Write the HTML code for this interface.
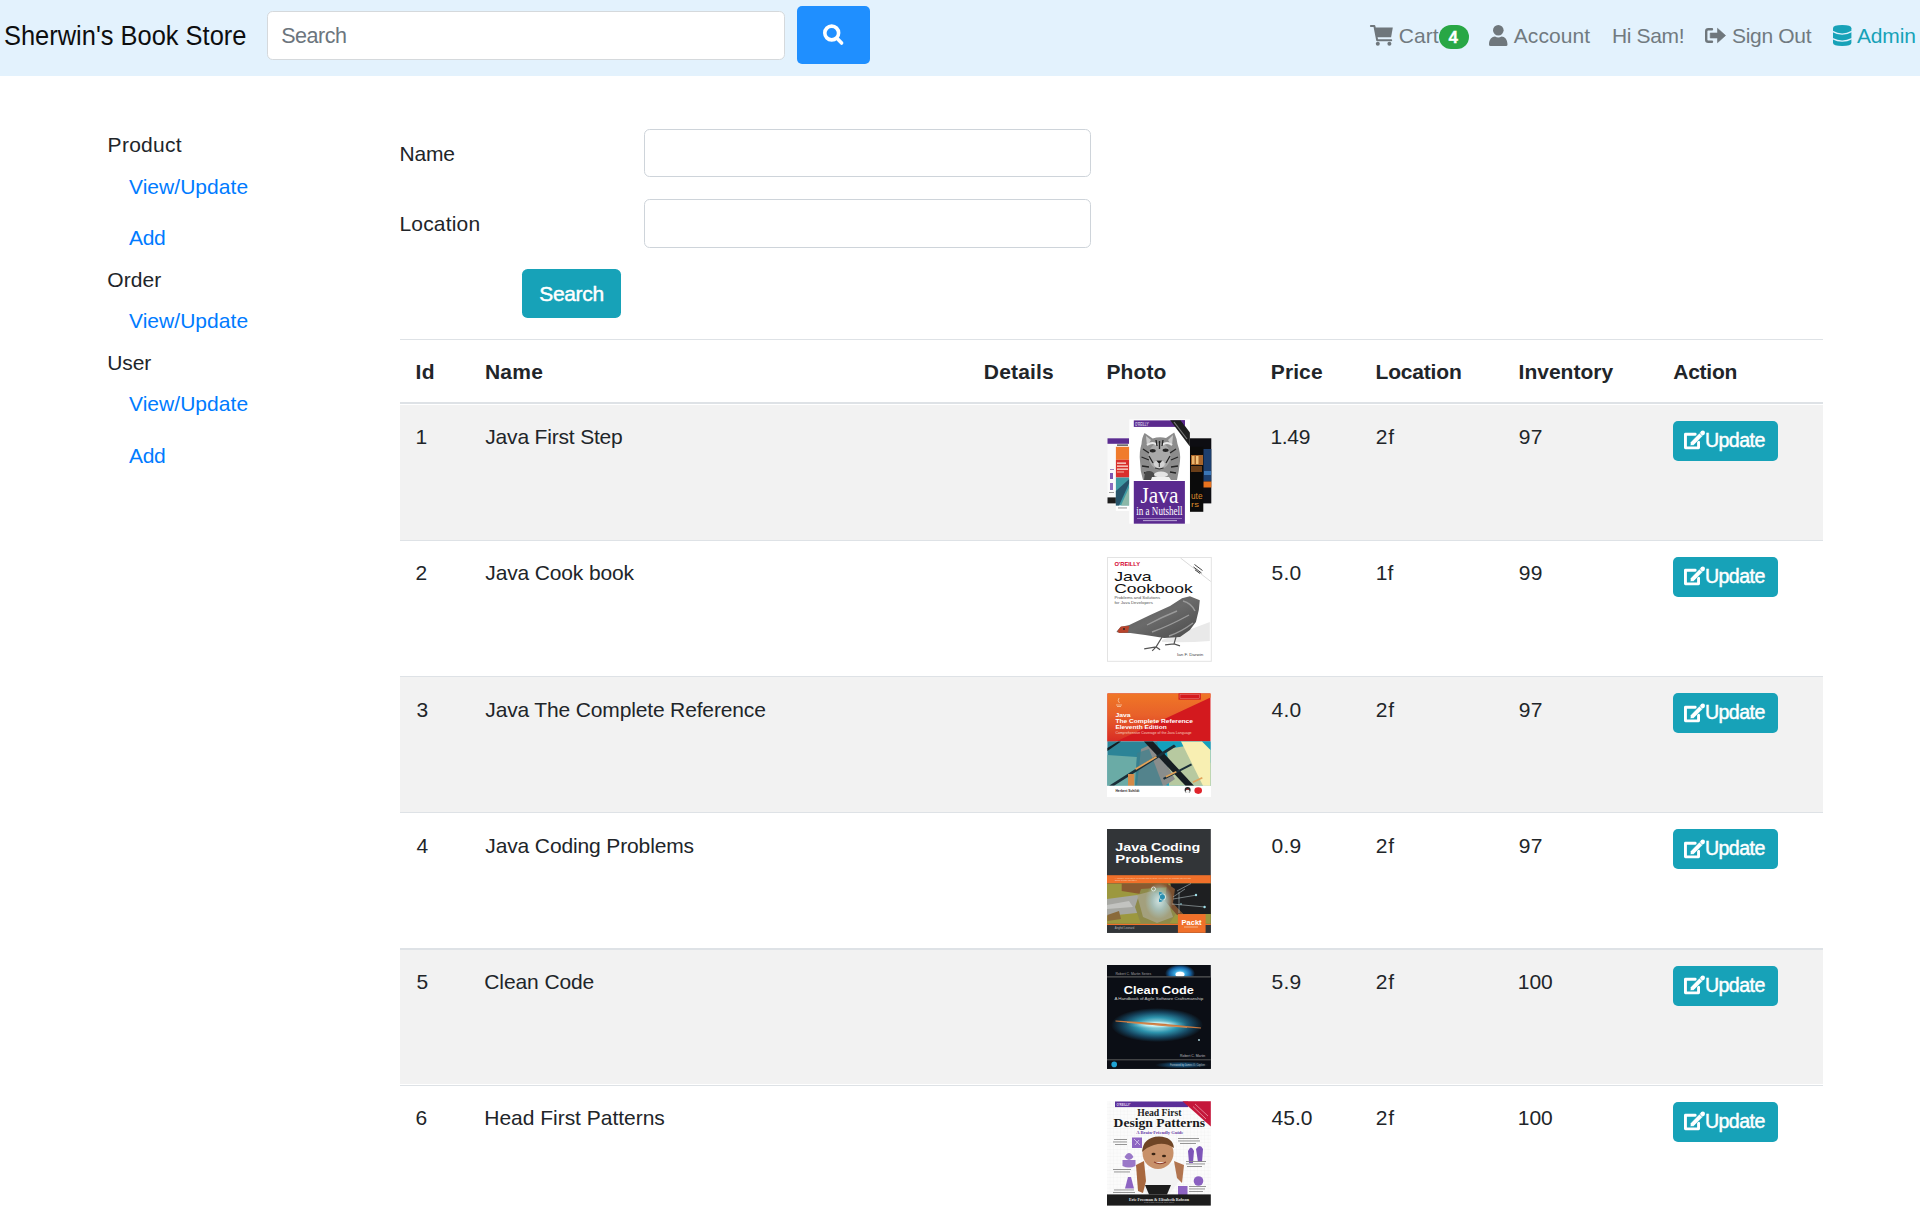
<!DOCTYPE html>
<html><head><meta charset="utf-8">
<style>
html,body{margin:0;padding:0;background:#fff;}
body{width:1920px;height:1208px;position:relative;overflow:hidden;font-family:"Liberation Sans",sans-serif;}
.t{position:absolute;white-space:nowrap;}
.nav{position:absolute;left:0;top:0;width:1920px;height:76.4px;background:#e3f2fd;}
.inp{position:absolute;box-sizing:border-box;background:#fff;border:1.4px solid #ced4da;border-radius:5.6px;}
.btn{position:absolute;border-radius:5.6px;}
.hl{position:absolute;left:400px;width:1422.7px;background:#dee2e6;}
.rowbg{position:absolute;left:400px;width:1422.7px;background:#f2f2f2;}
.ubtn{position:absolute;left:1673px;width:105px;height:40.2px;background:#17a2b8;border-radius:5px;}
.edit{position:absolute;left:1684px;}
svg{position:absolute;overflow:visible;}
</style></head><body>
<div class="nav"></div>
<div class="inp" style="left:267px;top:10.5px;width:518px;height:49.2px;border-color:#d5d9dc"></div>
<div class="btn" style="left:797px;top:6.1px;width:73px;height:57.6px;background:#1f8fff;border-radius:5px"></div>
<svg style="left:819px;top:20px" width="28" height="28" viewBox="0 0 28 28"><circle cx="12.7" cy="13" r="6.9" fill="none" stroke="#fff" stroke-width="3.6"/><path d="M18.2 18.6 L22.6 23" stroke="#fff" stroke-width="3.6" stroke-linecap="round"/></svg>
<!-- cart icon -->
<svg style="left:1370px;top:24.7px" width="23" height="21" viewBox="0 0 23 21"><path d="M0.9 1.1 H4.4 L7.2 15.3 H21.2" fill="none" stroke="#6f777c" stroke-width="2" stroke-linejoin="round" stroke-linecap="round"/><path d="M4.6 2.6 H22.8 L21.1 12.2 H6.3 Z" fill="#6f777c"/><circle cx="7.8" cy="18.7" r="2" fill="#6f777c"/><circle cx="19.4" cy="18.7" r="2" fill="#6f777c"/></svg>
<!-- badge -->
<div style="position:absolute;left:1439.3px;top:25px;width:29.5px;height:24px;border-radius:12px;background:#28a745"></div>
<div class="t" style="left:1448.6px;top:28.5px;font-size:17px;line-height:17px;font-weight:700;color:#fff;-webkit-text-stroke:0.3px #fff">4</div>
<!-- user icon -->
<svg style="left:1489.2px;top:24.7px" width="19" height="21" viewBox="0 0 19 21"><circle cx="9.3" cy="5.3" r="5.3" fill="#6f777c"/><path d="M0 19.5 C0 14.5 3 11.6 6 11.6 Q9.3 13.4 12.6 11.6 C15.6 11.6 18.5 14.5 18.5 19.5 Q18.5 21 17 21 H1.5 Q0 21 0 19.5 Z" fill="#6f777c"/></svg>
<!-- sign out icon -->
<svg style="left:1705.2px;top:27.6px" width="21" height="15" viewBox="0 0 21 15"><path d="M7 1.2 H3.2 Q1.2 1.2 1.2 3.2 V11.8 Q1.2 13.8 3.2 13.8 H7" fill="none" stroke="#6f777c" stroke-width="2.4" stroke-linecap="round"/><path d="M5.2 5 H12.5 V0.3 L20.6 7.5 L12.5 14.7 V10 H5.2 Z" fill="#6f777c" stroke="#6f777c" stroke-width="0.6" stroke-linejoin="round"/></svg>
<!-- database icon -->
<svg style="left:1832.9px;top:24.7px" width="19" height="21" viewBox="0 0 19 21"><path d="M0 3.3 Q0 0 9.2 0 Q18.4 0 18.4 3.3 V17.7 Q18.4 21 9.2 21 Q0 21 0 17.7 Z" fill="#17a2b8"/><path d="M-0.5 6.4 Q9.2 11.9 18.9 6.4 M-0.5 13.7 Q9.2 18.7 18.9 13.7" fill="none" stroke="#e3f2fd" stroke-width="1.3"/></svg>
<!-- form inputs -->
<div class="inp" style="left:643.8px;top:129px;width:447.3px;height:48.4px"></div>
<div class="inp" style="left:643.8px;top:199.1px;width:447.3px;height:48.7px"></div>
<div class="btn" style="left:521.6px;top:268.6px;width:99.1px;height:49.1px;background:#17a2b8"></div>
<div class="hl" style="top:338.8px;height:1.4px"></div><div class="hl" style="top:401.9px;height:2.6px"></div><div class="rowbg" style="top:404.50px;height:135.00px"></div><div class="ubtn" style="top:420.50px"></div><svg class="edit" style="top:431.10px" viewBox="0 0 21 19" width="21" height="19"><path d="M11.2 3.3 H1.45 V16.85 H14.55 V11.2" fill="none" stroke="#fff" stroke-width="2.9" stroke-linejoin="round" stroke-linecap="round"/><path d="M6.3 14.6 L6.48 11.26 L17.23 0.26 L20.37 3.34 L9.62 14.34 Z" fill="#fff" stroke="#19a5b9" stroke-width="0.5" stroke-linejoin="round"/><path d="M15.3 1.8 L18.4 4.9" stroke="#19a5b9" stroke-width="0.8"/><circle cx="18.8" cy="1.8" r="2.2" fill="#fff"/></svg><div class="hl" style="top:539.50px;height:1.4px"></div><div class="ubtn" style="top:556.75px"></div><svg class="edit" style="top:567.35px" viewBox="0 0 21 19" width="21" height="19"><path d="M11.2 3.3 H1.45 V16.85 H14.55 V11.2" fill="none" stroke="#fff" stroke-width="2.9" stroke-linejoin="round" stroke-linecap="round"/><path d="M6.3 14.6 L6.48 11.26 L17.23 0.26 L20.37 3.34 L9.62 14.34 Z" fill="#fff" stroke="#19a5b9" stroke-width="0.5" stroke-linejoin="round"/><path d="M15.3 1.8 L18.4 4.9" stroke="#19a5b9" stroke-width="0.8"/><circle cx="18.8" cy="1.8" r="2.2" fill="#fff"/></svg><div class="hl" style="top:675.75px;height:1.4px"></div><div class="rowbg" style="top:677.15px;height:134.85px"></div><div class="ubtn" style="top:693.00px"></div><svg class="edit" style="top:703.60px" viewBox="0 0 21 19" width="21" height="19"><path d="M11.2 3.3 H1.45 V16.85 H14.55 V11.2" fill="none" stroke="#fff" stroke-width="2.9" stroke-linejoin="round" stroke-linecap="round"/><path d="M6.3 14.6 L6.48 11.26 L17.23 0.26 L20.37 3.34 L9.62 14.34 Z" fill="#fff" stroke="#19a5b9" stroke-width="0.5" stroke-linejoin="round"/><path d="M15.3 1.8 L18.4 4.9" stroke="#19a5b9" stroke-width="0.8"/><circle cx="18.8" cy="1.8" r="2.2" fill="#fff"/></svg><div class="hl" style="top:812.00px;height:1.4px"></div><div class="ubtn" style="top:829.25px"></div><svg class="edit" style="top:839.85px" viewBox="0 0 21 19" width="21" height="19"><path d="M11.2 3.3 H1.45 V16.85 H14.55 V11.2" fill="none" stroke="#fff" stroke-width="2.9" stroke-linejoin="round" stroke-linecap="round"/><path d="M6.3 14.6 L6.48 11.26 L17.23 0.26 L20.37 3.34 L9.62 14.34 Z" fill="#fff" stroke="#19a5b9" stroke-width="0.5" stroke-linejoin="round"/><path d="M15.3 1.8 L18.4 4.9" stroke="#19a5b9" stroke-width="0.8"/><circle cx="18.8" cy="1.8" r="2.2" fill="#fff"/></svg><div class="hl" style="top:948.25px;height:1.4px"></div><div class="rowbg" style="top:949.65px;height:134.85px"></div><div class="ubtn" style="top:965.50px"></div><svg class="edit" style="top:976.10px" viewBox="0 0 21 19" width="21" height="19"><path d="M11.2 3.3 H1.45 V16.85 H14.55 V11.2" fill="none" stroke="#fff" stroke-width="2.9" stroke-linejoin="round" stroke-linecap="round"/><path d="M6.3 14.6 L6.48 11.26 L17.23 0.26 L20.37 3.34 L9.62 14.34 Z" fill="#fff" stroke="#19a5b9" stroke-width="0.5" stroke-linejoin="round"/><path d="M15.3 1.8 L18.4 4.9" stroke="#19a5b9" stroke-width="0.8"/><circle cx="18.8" cy="1.8" r="2.2" fill="#fff"/></svg><div class="hl" style="top:1084.50px;height:1.4px"></div><div class="ubtn" style="top:1101.75px"></div><svg class="edit" style="top:1112.35px" viewBox="0 0 21 19" width="21" height="19"><path d="M11.2 3.3 H1.45 V16.85 H14.55 V11.2" fill="none" stroke="#fff" stroke-width="2.9" stroke-linejoin="round" stroke-linecap="round"/><path d="M6.3 14.6 L6.48 11.26 L17.23 0.26 L20.37 3.34 L9.62 14.34 Z" fill="#fff" stroke="#19a5b9" stroke-width="0.5" stroke-linejoin="round"/><path d="M15.3 1.8 L18.4 4.9" stroke="#19a5b9" stroke-width="0.8"/><circle cx="18.8" cy="1.8" r="2.2" fill="#fff"/></svg>
<svg style="left:1106.5px;top:419.45px;overflow:hidden" width="105" height="105" viewBox="0 0 105 105"><defs><radialGradient id="tg" cx="0.5" cy="0.45" r="0.55"><stop offset="0" stop-color="#9a9a9a"/><stop offset="0.7" stop-color="#8a8a8a"/><stop offset="1" stop-color="#d0d0d0"/></radialGradient></defs>
<rect x="0.5" y="18.8" width="21.5" height="66.6" fill="#fafafa"/>
<rect x="0.5" y="19.3" width="21.5" height="5.5" fill="#5b2c90"/>
<rect x="10" y="25.5" width="11" height="1.2" fill="#333"/>
<rect x="3" y="50" width="4" height="1" fill="#9c88c0"/>
<rect x="3" y="54" width="3" height="6" fill="#7b55b0"/>
<rect x="3" y="64" width="3" height="7" fill="#8c6cc0"/>
<rect x="2" y="73" width="5" height="1" fill="#999"/>
<rect x="0.5" y="78.4" width="9" height="6" fill="#1d1d1d"/>
<rect x="8.9" y="27.8" width="13.4" height="64" fill="#ffffff"/>
<rect x="8.9" y="27.8" width="13.4" height="13" fill="#f07b2c"/>
<rect x="8.9" y="40.8" width="13.4" height="17.7" fill="#d9302c"/>
<rect x="10" y="43.5" width="9" height="1.3" fill="#fbe1d8"/>
<rect x="10" y="46.5" width="11" height="1.3" fill="#fbe1d8"/>
<rect x="10" y="49.5" width="11" height="1.3" fill="#fbe1d8"/>
<rect x="10" y="52.5" width="7" height="1" fill="#f4b4a4"/>
<rect x="8.9" y="58.5" width="13.4" height="27.9" fill="#3f9aa3"/>
<path d="M8.9 72 L22.3 60 V64 L12 86.4 H8.9 Z" fill="#27546a"/>
<path d="M14 86.4 L22.3 68 V86.4 Z" fill="#8cb8a8"/>
<rect x="11" y="88.5" width="9" height="0.9" fill="#888"/>
<rect x="82.9" y="19.3" width="21.4" height="65.1" fill="#0d0d12"/>
<rect x="96.3" y="30" width="8" height="32.5" fill="#1d3f6e"/>
<rect x="97" y="52" width="7" height="4" fill="#3a76b6"/>
<rect x="96.3" y="62.5" width="8" height="6" fill="#e8731f"/>
<rect x="82.9" y="27.8" width="13.4" height="65" fill="#0b0b0b"/>
<rect x="84" y="36" width="12" height="10" fill="#a8652a"/>
<rect x="85" y="37" width="2.5" height="8" fill="#e8b36a"/>
<rect x="89" y="37" width="2.5" height="8" fill="#f2c47c"/>
<rect x="84" y="47" width="11" height="6" fill="#6a3e18"/>
<text x="84" y="80" font-family="Liberation Sans" font-size="9" font-weight="400" fill="#d9892d" textLength="11.5" lengthAdjust="spacingAndGlyphs" >ute</text>
<text x="84" y="88" font-family="Liberation Sans" font-size="8" font-weight="400" fill="#d9892d" textLength="8" lengthAdjust="spacingAndGlyphs" >rs</text>
<rect x="22.3" y="0.4" width="60.6" height="104.3" fill="#ffffff"/>
<rect x="26.8" y="1.4" width="51.1" height="6.5" fill="#5b2a8e"/>
<text x="28" y="6.6" font-family="Liberation Sans" font-size="4.6" font-weight="700" fill="#d8cce8" textLength="14" lengthAdjust="spacingAndGlyphs" >O'REILLY'</text>
<path d="M63.2 1.2 H73.7 L82.9 13.6 V27.5 Z" fill="#1e1e1e"/><path d="M73.7 1.2 H78 V7.35 Z" fill="#5b2a8e"/><path d="M67 3 L80 20" stroke="#777" stroke-width="1.2"/>
<g>
<path d="M37.6 14 L45.7 19.5 Q52 17.5 59 19 L67.2 13.5 Q70 20 70.5 25 Q74 35 73 42 Q72 52 70 61 L36 61 Q33 52 33 42 Q32 33 34.5 25 Q35 18 37.6 14 Z" fill="#8c8c8c"/>
<path d="M39 17 L44 21 L40 27 Z M66 16 L61 21 L65 27 Z" fill="#c9c9c9"/>
<ellipse cx="52.5" cy="37" rx="11" ry="13" fill="#a9a9a9"/>
<path d="M40 26 Q46 22 50 26 M55 26 Q60 22 65 26" stroke="#e8e8e8" stroke-width="2" fill="none"/>
<ellipse cx="45.7" cy="31.8" rx="3" ry="1.7" fill="#262626"/>
<ellipse cx="58.6" cy="31.3" rx="3" ry="1.7" fill="#262626"/>
<path d="M52.5 22 V30 M49 21 L50 27 M56 21 L55 27 M36 30 L42 34 M69 30 L63 34 M34.5 38 L42 41 M71 38 L64 41 M35 47 L42 48 M71 47 L64 48 M37 54 L43 53 M69 54 L63 53 M42 37 L46 44 M63 37 L59 44" stroke="#262626" stroke-width="1.3" fill="none"/>
<ellipse cx="52.3" cy="45" rx="5.5" ry="4" fill="#d2d2d2"/>
<path d="M49.3 41.5 L55.3 41.5 L52.3 45 Z" fill="#1b1b1b"/>
<path d="M52.3 45 V48 M48 49 Q52.3 51 56.6 49" stroke="#2a2a2a" stroke-width="0.9" fill="none"/>
<path d="M38 53 Q45 50 48 56 L46 61 H37 Z" fill="#4a4a4a"/>
<ellipse cx="54" cy="55.5" rx="7" ry="3" fill="#e4e4e4"/>
<path d="M45 58 L62 58 L64 61 H44 Z" fill="#f0f0f0"/>
</g>
<rect x="26.8" y="62" width="51.1" height="42.7" fill="#5a2a8f"/>
<text x="33.5" y="84.4" font-family="Liberation Serif" font-size="23" font-weight="400" fill="#fff" textLength="38" lengthAdjust="spacingAndGlyphs" >Java</text>
<text x="29.3" y="96.3" font-family="Liberation Serif" font-size="11.5" font-weight="400" fill="#fff" textLength="46.2" lengthAdjust="spacingAndGlyphs" >in a Nutshell</text>
<rect x="30" y="99" width="45" height="0.6" fill="#b8a4d4"/>
<rect x="36" y="101.2" width="34" height="0.9" fill="#c6b6de"/>
</svg>
<svg style="left:1106.5px;top:556.50px;overflow:hidden" width="105" height="105" viewBox="0 0 105 105"><defs><linearGradient id="spk" x1="0" y1="0" x2="1" y2="1"><stop offset="0" stop-color="#5a5a5a"/><stop offset="0.5" stop-color="#6a6a6a"/><stop offset="1" stop-color="#4a4a4a"/></linearGradient></defs>
<rect x="0.5" y="0.5" width="103.8" height="103.8" fill="#fff" stroke="#e3e3e3" stroke-width="1"/>
<text x="7.4" y="9.4" font-family="Liberation Sans" font-size="4.9" font-weight="700" fill="#d3002d" textLength="25.8" lengthAdjust="spacingAndGlyphs" >O'REILLY</text>
<text x="7.2" y="23.8" font-family="Liberation Sans" font-size="12.4" font-weight="400" fill="#111" textLength="37.5" lengthAdjust="spacingAndGlyphs" >Java</text>
<text x="7.2" y="36.2" font-family="Liberation Sans" font-size="12.4" font-weight="400" fill="#111" textLength="78.5" lengthAdjust="spacingAndGlyphs" >Cookbook</text>
<text x="7.4" y="42.2" font-family="Liberation Sans" font-size="3.9" font-weight="400" fill="#555" textLength="45.7" lengthAdjust="spacingAndGlyphs" >Problems and Solutions</text>
<text x="7.4" y="46.6" font-family="Liberation Sans" font-size="3.9" font-weight="400" fill="#555" textLength="38.5" lengthAdjust="spacingAndGlyphs" >for Java Developers</text>
<path d="M73.5 1 L103.8 24.5" stroke="#d0d0d0" stroke-width="0.8"/>
<path d="M87.5 7.5 L95.5 13.5 M86.5 10 L94.5 16 M88 12.8 L93 16.5" stroke="#444" stroke-width="1"/>
<path d="M55 83 L102.8 65 V84 Q80 86 55 85 Z" fill="#e9e9e9"/>
<path d="M9.4 75 L13.4 70 L22.3 68 L43.2 58.1 L63 49.1 L75 41.2 L82.9 39.2 L92.8 43.2 L91.8 53.1 L88.9 65 L82.9 73 L73 79.9 L57.1 80.9 L38.2 78 L23.3 76 L13.4 76 Z" fill="url(#spk)"/>
<path d="M40 68 Q55 60 70 54 M45 75 Q62 69 82 58 M62 79 Q74 75 86 66 M76 44 Q84 46 88 54" stroke="#9a9a9a" stroke-width="1.4" fill="none"/>
<path d="M10.4 74 L14 69.5 L22.3 69 L21 75.5 L12 76 Z" fill="#b8442c"/>
<circle cx="17" cy="72" r="0.9" fill="#222"/>
<path d="M55.1 80 L49.1 89.9 M37.2 91.8 L49.1 89.9 L53.1 92.8 M49.1 89.9 L45.2 93.8 M69 80 L67 86.9 M58.1 87.9 L67 86.9 L73 88.9" stroke="#555" stroke-width="1.2" fill="none"/>
<text x="70" y="98.8" font-family="Liberation Sans" font-size="3.6" font-weight="400" fill="#444" textLength="26.3" lengthAdjust="spacingAndGlyphs" >Ian F. Darwin</text>
</svg>
<svg style="left:1106.5px;top:692.50px;overflow:hidden" width="105" height="105" viewBox="0 0 105 105"><defs><linearGradient id="g3" x1="0" y1="0" x2="0" y2="1"><stop offset="0" stop-color="#f07726"/><stop offset="0.45" stop-color="#e8612a"/><stop offset="1" stop-color="#d82c24"/></linearGradient></defs>
<rect x="0" y="0" width="104" height="104" fill="#fff"/>
<rect x="0.4" y="0.4" width="103.1" height="48" fill="#d3191e"/>
<path d="M0.4 0.4 H103.5 V4.5 L9 48.4 H0.4 Z" fill="url(#g3)"/>
<rect x="71.5" y="0.4" width="22.3" height="6.3" fill="#d41a1e"/>
<rect x="73" y="1.6" width="19.5" height="3.9" fill="none" stroke="#f3b8a8" stroke-width="0.35"/>
<path d="M12 5 Q10 8 12.5 10 M9 12 H15 M10 13.5 H14" stroke="#f5c9a6" stroke-width="0.8" fill="none"/>
<text x="8.4" y="23.9" font-family="Liberation Sans" font-size="5.6" font-weight="700" fill="#fff" textLength="15.2" lengthAdjust="spacingAndGlyphs" >Java</text>
<text x="8.4" y="30.2" font-family="Liberation Sans" font-size="5.6" font-weight="700" fill="#fff" textLength="77.6" lengthAdjust="spacingAndGlyphs" >The Complete Reference</text>
<text x="8.4" y="36.2" font-family="Liberation Sans" font-size="5.6" font-weight="700" fill="#fff" textLength="51.3" lengthAdjust="spacingAndGlyphs" >Eleventh Edition</text>
<text x="8.4" y="41.1" font-family="Liberation Sans" font-size="2.9" font-weight="400" fill="#f6cdbf" textLength="76.2" lengthAdjust="spacingAndGlyphs" >Comprehensive Coverage of the Java Language</text>
<rect x="0.4" y="48.4" width="103.1" height="44.4" fill="#2c8497"/>
<path d="M0.4 62 L30 64 L28 92.8 H0.4 Z" fill="#6aaba6"/>
<path d="M50 48.4 H103.5 V92.8 H60 Z" fill="#13a0bd"/>
<path d="M60 56 L85 52 L103.5 70 V92.8 H62 Z" fill="#b7c9a0"/>
<path d="M74 48.4 H95 L103.5 57 V92.8 H96 Z" fill="#f8efb2"/>
<path d="M34 56 L47 50 L68 86 L58 92.8 H30 Z" fill="#8a8d8c"/>
<path d="M30 60 L42 56 L56 92.8 H28 Z" fill="#3c7f8c" opacity="0.7"/>
<path d="M37 48.6 L46 48.6 L87 92.8 L78.5 92.8 Z" fill="#161d22"/>
<path d="M0.4 55 L11 48.6 L14 48.6 L0.4 58 Z" fill="#161d22"/>
<path d="M2 92.8 L67 51.5 L69 53.6 L7 92.8 Z" fill="#1a2e38"/>
<path d="M28 75.5 L49 63 L50 64.5 L29 77 Z" fill="#e2a35a"/>
<path d="M56 85 L84 70.5 L85 72.2 L57 86.7 Z" fill="#1a2e38"/>
<path d="M58.5 83 L69 78 L69.7 79.4 L59.2 84.4 Z" fill="#e2a35a"/>
<path d="M85.5 88.5 L95 84 L95.7 85.4 L86.2 89.9 Z" fill="#e2a35a"/>
<rect x="21" y="81" width="6.3" height="11.8" fill="#d48a48"/>
<rect x="0.4" y="92.8" width="103.1" height="10.8" fill="#fff"/>
<text x="8.4" y="98.5" font-family="Liberation Sans" font-size="3.1" font-weight="700" fill="#2a2a2a" textLength="24" lengthAdjust="spacingAndGlyphs" >Herbert Schildt</text>
<ellipse cx="80.6" cy="97" rx="3" ry="3" fill="#2a2a2a"/>
<ellipse cx="80.6" cy="98.3" rx="1.9" ry="1.9" fill="#f2f2f2"/>
<rect x="79.6" y="95.8" width="2" height="1" fill="#d3191e"/>
<ellipse cx="91.2" cy="97.6" rx="3.8" ry="3.3" fill="#e0242b"/>
</svg>
<svg style="left:1106.5px;top:829.00px;overflow:hidden" width="105" height="105" viewBox="0 0 105 105"><defs><radialGradient id="g4" cx="0.5" cy="0.5" r="0.5"><stop offset="0" stop-color="#d6eef2"/><stop offset="0.5" stop-color="#a7c3c0"/><stop offset="1" stop-color="#a7c3c0" stop-opacity="0"/></radialGradient></defs>
<rect x="0" y="0" width="103.8" height="103.8" fill="#323538"/>
<text x="8.3" y="21.8" font-family="Liberation Sans" font-size="11.8" font-weight="700" fill="#fff" textLength="85" lengthAdjust="spacingAndGlyphs" >Java Coding</text>
<text x="8.3" y="34.2" font-family="Liberation Sans" font-size="11.8" font-weight="700" fill="#fff" textLength="68" lengthAdjust="spacingAndGlyphs" >Problems</text>
<rect x="0" y="46.2" width="103.8" height="8.3" fill="#f0702a"/>
<text x="7.7" y="49.5" font-family="Liberation Sans" font-size="2.2" font-weight="400" fill="#fbd3b8" textLength="76" lengthAdjust="spacingAndGlyphs" >A unique collection of problems to help you excel in coding interviews</text>
<text x="7.7" y="52" font-family="Liberation Sans" font-size="2.2" font-weight="400" fill="#fbd3b8" textLength="22" lengthAdjust="spacingAndGlyphs" >and code better</text>
<rect x="0" y="54.5" width="103.8" height="40.4" fill="#9c983f"/>
<path d="M14.7 54.5 H60.5 L64 64 L40 66 L14.7 62 Z" fill="#8a5a30"/>
<path d="M0 70 L30 66 L46 74 L30 84 L0 87 Z" fill="#a6a7a2"/>
<path d="M0.4 86 L12 82 L14 90 L0.4 92 Z" fill="#8a6a3a"/>
<path d="M0 76 L22 72 L26 78 L0 80 Z" fill="#c2c3c0"/>
<path d="M34 60 L64 58 L72 80 L62 94.9 L34 94.9 L28 78 Z" fill="#8e8a4a"/><path d="M30 66 L45 62 L60 70 L66 88 L50 94 L36 88 Z" fill="#a9a58a" opacity="0.8"/>
<path d="M63.4 54.5 H103.8 V85.1 H76 L66 76 Z" fill="#1e1f21"/>
<path d="M60 54.5 L68 60 L66 74 L76 85 L70 86 L58 72 Z" fill="#7a5030"/>
<ellipse cx="52" cy="72" rx="14" ry="18" fill="url(#g4)" opacity="0.85"/>
<circle cx="46.5" cy="60" r="2" fill="none" stroke="#e8f4f6" stroke-width="0.8"/>
<path d="M52 63 Q57 63 58 68 Q57 73 52 73" fill="#2a8fb0"/>
<circle cx="55.5" cy="68" r="3.2" fill="none" stroke="#e6f4ee" stroke-width="0.7"/>
<path d="M66 70 L90 66 M70 62 L84 54.5 M65 75 L98 78 M72 63 V84 M66 68 L78 60" stroke="#c9d8dc" stroke-width="0.5" fill="none"/>
<circle cx="89" cy="66" r="1.2" fill="#9fe0ea"/><circle cx="97.6" cy="78" r="1.2" fill="#9fe0ea"/><circle cx="74" cy="75" r="0.8" fill="#9fe0ea"/>
<rect x="0" y="94.9" width="103.8" height="1.1" fill="#f0702a"/>
<rect x="0" y="96" width="103.8" height="7.8" fill="#323538"/>
<text x="7.8" y="100.4" font-family="Liberation Sans" font-size="2.8" font-weight="400" fill="#b5b5b5" textLength="19.5" lengthAdjust="spacingAndGlyphs" >Anghel Leonard</text>
<rect x="70.9" y="85.1" width="27.7" height="18.7" fill="#f0702a"/>
<text x="74.6" y="96" font-family="Liberation Sans" font-size="7.4" font-weight="700" fill="#fff" textLength="20" lengthAdjust="spacingAndGlyphs" >Packt</text>
<rect x="77" y="97.6" width="14" height="0.8" fill="#f8c4a0"/>
</svg>
<svg style="left:1106.5px;top:965.00px;overflow:hidden" width="105" height="105" viewBox="0 0 105 105"><defs><radialGradient id="g5" cx="0.5" cy="0.5" r="0.5"><stop offset="0" stop-color="#e6f6f6"/><stop offset="0.18" stop-color="#8fd3dc"/><stop offset="0.45" stop-color="#2d93ad"/><stop offset="0.75" stop-color="#15445e"/><stop offset="1" stop-color="#0b0e15"/></radialGradient>
<radialGradient id="g5c" cx="0.5" cy="0.5" r="0.5"><stop offset="0" stop-color="#ffffff"/><stop offset="0.4" stop-color="#bdeef2"/><stop offset="1" stop-color="#2d93ad" stop-opacity="0"/></radialGradient>
<radialGradient id="g5t" cx="0.5" cy="0.5" r="0.5"><stop offset="0" stop-color="#e8f8ff"/><stop offset="0.35" stop-color="#38a8e0"/><stop offset="0.7" stop-color="#1560a0"/><stop offset="1" stop-color="#0b0e15"/></radialGradient>
<radialGradient id="g5b" cx="0.5" cy="0.5" r="0.5"><stop offset="0" stop-color="#1d6fa6"/><stop offset="1" stop-color="#0b0e15"/></radialGradient></defs>
<rect x="0" y="0" width="103.8" height="103.8" fill="#0b0e15"/>
<ellipse cx="73" cy="8.5" rx="15" ry="9" fill="url(#g5t)"/>
<ellipse cx="73" cy="9.5" rx="4.5" ry="2.8" fill="#ffffff"/>
<rect x="0" y="11.4" width="103.8" height="92.4" fill="#0b0e15"/>
<text x="8.4" y="9.6" font-family="Liberation Sans" font-size="3.3" font-weight="400" fill="#a0a0a0" textLength="35.8" lengthAdjust="spacingAndGlyphs" >Robert C. Martin Series</text>
<rect x="0" y="11.4" width="103.8" height="1" fill="#6a6a6a"/>
<text x="16.8" y="28.8" font-family="Liberation Sans" font-size="11.2" font-weight="700" fill="#fff" textLength="70" lengthAdjust="spacingAndGlyphs" >Clean Code</text>
<text x="7.4" y="35.1" font-family="Liberation Sans" font-size="3.7" font-weight="400" fill="#d0d0d0" textLength="88.9" lengthAdjust="spacingAndGlyphs" >A Handbook of Agile Software Craftsmanship</text>
<ellipse cx="50" cy="60" rx="46" ry="17" fill="url(#g5)"/>
<ellipse cx="50" cy="59.5" rx="30" ry="5" fill="url(#g5c)"/>
<path d="M8.5 55.5 Q50 57.5 94 62.5 L94 63.5 Q50 61 8.5 56.5 Z" fill="#c7773f"/>
<path d="M20 57.5 Q50 59.5 80 62.5" stroke="#e39a5c" stroke-width="0.6" fill="none"/>
<circle cx="92" cy="75" r="0.9" fill="#bfe8f0"/>
<text x="73" y="92.2" font-family="Liberation Sans" font-size="3.2" font-weight="400" fill="#bdbdbd" textLength="25.3" lengthAdjust="spacingAndGlyphs" >Robert C. Martin</text>
<rect x="0" y="94.3" width="103.8" height="1" fill="#5a5a5a"/>
<ellipse cx="75" cy="100" rx="27" ry="3.6" fill="url(#g5b)"/>
<circle cx="7.2" cy="99.4" r="2.8" fill="#1ea3d4"/>
<text x="63" y="100.6" font-family="Liberation Sans" font-size="2.6" font-weight="400" fill="#b8b8b8" textLength="35" lengthAdjust="spacingAndGlyphs" >Foreword by James O. Coplien</text>
</svg>
<svg style="left:1106.5px;top:1100.80px;overflow:hidden" width="105" height="105" viewBox="0 0 105 105"><defs><pattern id="grid6" width="3.5" height="3.5" patternUnits="userSpaceOnUse"><path d="M3.5 0 V3.5 H0" fill="none" stroke="#e9e9e9" stroke-width="0.35"/></pattern></defs>
<rect x="0" y="0" width="103.8" height="104.5" fill="#fbfbfb"/>
<rect x="0" y="0" width="103.8" height="104.5" fill="url(#grid6)"/>
<rect x="8" y="0.5" width="73.1" height="5.6" fill="#5b2f98"/>
<text x="9.5" y="4.9" font-family="Liberation Sans" font-size="4" font-weight="700" fill="#e8dff5" textLength="14" lengthAdjust="spacingAndGlyphs" >O'REILLY'</text>
<path d="M75.5 0.3 H103.8 V25.5 Z" fill="#c5163a"/>
<path d="M88 3 L101 15 M86 5.5 L99 18" stroke="#f3c2cc" stroke-width="0.6"/>
<text x="30.2" y="15.1" font-family="Liberation Serif" font-size="9.4" font-weight="700" fill="#222" textLength="44.3" lengthAdjust="spacingAndGlyphs" >Head First</text>
<text x="6.6" y="25.9" font-family="Liberation Serif" font-size="12.4" font-weight="700" fill="#1a1a1a" textLength="91.5" lengthAdjust="spacingAndGlyphs" >Design Patterns</text>
<text x="29.2" y="33" font-family="Liberation Serif" font-size="4.4" font-weight="700" fill="#6b3fa8" textLength="47.2" lengthAdjust="spacingAndGlyphs" >A Brain-Friendly Guide</text>
<rect x="25" y="36.5" width="10" height="10.5" fill="#8d64c2"/>
<path d="M27 38 L33 44 M28 44 L32 39" stroke="#e8dcf5" stroke-width="0.7"/>
<path d="M17.5 56 Q22 48 26.5 56 Q22 62 17.5 56 Z M15.5 59 H28.5 V65 Q22 68 15.5 65 Z" fill="#9a78c8"/>
<path d="M21 76 L24 76 L27 87.5 L18 87.5 Z" fill="#8d64c2"/>
<path d="M81 50 Q84 43 87 50 L86 62 L82 62 Z M89 48 Q93 42 96 48 L95 61 L91 61 Z" fill="#7d55b8"/>
<circle cx="91.5" cy="80" r="4.8" fill="#8a60c0"/>
<rect x="71" y="85" width="9.5" height="10" fill="#8d64c2"/>
<g fill="#8a8a8a">
<rect x="7" y="38" width="13" height="0.9"/><rect x="6" y="40.5" width="14" height="0.9"/><rect x="8" y="43" width="12" height="0.9"/>
<rect x="6" y="68" width="18" height="0.9"/><rect x="7" y="70.5" width="16" height="0.9"/>
<rect x="7" y="88.5" width="20" height="0.9"/><rect x="6" y="91" width="22" height="0.9"/>
<rect x="71" y="37" width="21" height="0.9"/><rect x="71" y="39.5" width="22" height="0.9"/><rect x="73" y="42" width="16" height="0.9"/>
<rect x="79" y="60" width="20" height="0.9"/><rect x="79" y="62.5" width="19" height="0.9"/><rect x="80" y="65" width="15" height="0.9"/>
<rect x="82" y="85" width="17" height="0.9"/><rect x="82" y="87.5" width="16" height="0.9"/><rect x="82" y="90" width="14" height="0.9"/>
</g>
<path d="M36 70 L33 84 L40 93.4 L62 93.4 L72 80 L75 68 L66 62 Z" fill="#f2f2f2"/>
<path d="M38 84 L42 93.4 H60 L64 84 Z" fill="#1c1c1c"/>
<path d="M29 64 L37 60 L39 80 L36 92 L31 90 Z" fill="#a8683f"/>
<path d="M67 60 L77 64 L75 82 L70 77 Z" fill="#b27550"/>
<ellipse cx="51" cy="52" rx="15.5" ry="16" fill="#c8916a"/>
<path d="M35 51 Q36 36 52 35.5 Q66 36 67 47 Q58 40.5 47 44 Q39 46.5 35 51 Z" fill="#6f4526"/>
<ellipse cx="46.5" cy="53" rx="2" ry="1.2" fill="#3a2515"/>
<ellipse cx="57" cy="55" rx="2" ry="1.2" fill="#3a2515"/>
<path d="M47 61 Q53 64.5 59 61" stroke="#8a3a2a" stroke-width="1.1" fill="#f4e6dc"/>
<rect x="0" y="93.4" width="103.8" height="11.2" fill="#1c1c1c"/>
<text x="22" y="99.5" font-family="Liberation Serif" font-size="4.2" font-weight="700" fill="#e6e6e6" textLength="60" lengthAdjust="spacingAndGlyphs" >Eric Freeman &amp; Elisabeth Robson</text>
<text x="37" y="102.2" font-family="Liberation Serif" font-size="2.3" font-weight="400" fill="#aaaaaa" textLength="30" lengthAdjust="spacingAndGlyphs" >with Kathy Sierra &amp; Bert Bates</text>
</svg>
<div class="t" style="left:3.65px;top:22.81px;font-size:26.8px;line-height:26.8px;font-weight:400;color:#0d0e0f;transform:scaleX(0.9493);transform-origin:0 0">Sherwin's Book Store</div>
<div class="t" style="left:281.20px;top:25.80px;font-size:21.5px;line-height:21.5px;font-weight:400;color:#6c757d;letter-spacing:-0.453px">Search</div>
<div class="t" style="left:1398.70px;top:25.02px;font-size:21px;line-height:21px;font-weight:400;color:#717a80;letter-spacing:0.054px">Cart</div>
<div class="t" style="left:1513.80px;top:24.92px;font-size:21px;line-height:21px;font-weight:400;color:#717a80;letter-spacing:0.059px">Account</div>
<div class="t" style="left:1611.90px;top:24.92px;font-size:21px;line-height:21px;font-weight:400;color:#717a80;letter-spacing:-0.324px">Hi Sam!</div>
<div class="t" style="left:1732.00px;top:24.92px;font-size:21px;line-height:21px;font-weight:400;color:#717a80;letter-spacing:-0.311px">Sign Out</div>
<div class="t" style="left:1857.00px;top:24.92px;font-size:21px;line-height:21px;font-weight:400;color:#17a2b8;letter-spacing:-0.161px">Admin</div>
<div class="t" style="left:107.60px;top:134.12px;font-size:21px;line-height:21px;font-weight:400;color:#212529;letter-spacing:0.277px">Product</div>
<div class="t" style="left:129.00px;top:175.52px;font-size:21px;line-height:21px;font-weight:400;color:#007bff;letter-spacing:0.039px">View/Update</div>
<div class="t" style="left:129.00px;top:227.22px;font-size:21px;line-height:21px;font-weight:400;color:#007bff;letter-spacing:-0.293px">Add</div>
<div class="t" style="left:107.30px;top:269.12px;font-size:21px;line-height:21px;font-weight:400;color:#212529;letter-spacing:0.053px">Order</div>
<div class="t" style="left:129.00px;top:310.02px;font-size:21px;line-height:21px;font-weight:400;color:#007bff;letter-spacing:0.039px">View/Update</div>
<div class="t" style="left:107.30px;top:351.72px;font-size:21px;line-height:21px;font-weight:400;color:#212529;letter-spacing:-0.115px">User</div>
<div class="t" style="left:129.00px;top:392.62px;font-size:21px;line-height:21px;font-weight:400;color:#007bff;letter-spacing:0.039px">View/Update</div>
<div class="t" style="left:129.00px;top:444.72px;font-size:21px;line-height:21px;font-weight:400;color:#007bff;letter-spacing:-0.293px">Add</div>
<div class="t" style="left:399.40px;top:143.42px;font-size:21px;line-height:21px;font-weight:400;color:#212529;letter-spacing:-0.146px">Name</div>
<div class="t" style="left:399.40px;top:212.92px;font-size:21px;line-height:21px;font-weight:400;color:#212529;letter-spacing:0.198px">Location</div>
<div class="t" style="left:539.20px;top:283.42px;font-size:21px;line-height:21px;font-weight:400;color:#fff;letter-spacing:-0.312px;-webkit-text-stroke:0.45px #fff">Search</div>
<div class="t" style="left:415.60px;top:361.32px;font-size:21px;line-height:21px;font-weight:700;color:#212529;letter-spacing:0.266px">Id</div>
<div class="t" style="left:484.90px;top:361.32px;font-size:21px;line-height:21px;font-weight:700;color:#212529;letter-spacing:0.261px">Name</div>
<div class="t" style="left:983.80px;top:361.32px;font-size:21px;line-height:21px;font-weight:700;color:#212529;letter-spacing:0.186px">Details</div>
<div class="t" style="left:1106.50px;top:361.32px;font-size:21px;line-height:21px;font-weight:700;color:#212529;letter-spacing:0.086px">Photo</div>
<div class="t" style="left:1270.80px;top:361.32px;font-size:21px;line-height:21px;font-weight:700;color:#212529;letter-spacing:0.102px">Price</div>
<div class="t" style="left:1375.60px;top:361.32px;font-size:21px;line-height:21px;font-weight:700;color:#212529;letter-spacing:-0.196px">Location</div>
<div class="t" style="left:1518.60px;top:361.32px;font-size:21px;line-height:21px;font-weight:700;color:#212529;letter-spacing:-0.005px">Inventory</div>
<div class="t" style="left:1673.30px;top:361.32px;font-size:21px;line-height:21px;font-weight:700;color:#212529;letter-spacing:-0.260px">Action</div>
<div class="t" style="left:415.40px;top:426.12px;font-size:21px;line-height:21px;font-weight:400;color:#212529;letter-spacing:0.250px">1</div>
<div class="t" style="left:485.30px;top:426.12px;font-size:21px;line-height:21px;font-weight:400;color:#212529;letter-spacing:-0.183px">Java First Step</div>
<div class="t" style="left:1270.50px;top:426.12px;font-size:21px;line-height:21px;font-weight:400;color:#212529;letter-spacing:-0.331px">1.49</div>
<div class="t" style="left:1375.70px;top:426.12px;font-size:21px;line-height:21px;font-weight:400;color:#212529;letter-spacing:0.821px">2f</div>
<div class="t" style="left:1518.80px;top:426.12px;font-size:21px;line-height:21px;font-weight:400;color:#212529;letter-spacing:0.250px">97</div>
<div class="t" style="left:1704.90px;top:430.61px;font-size:19.6px;line-height:19.6px;font-weight:400;color:#fff;letter-spacing:-0.557px;-webkit-text-stroke:0.45px #fff">Update</div>
<div class="t" style="left:415.40px;top:562.37px;font-size:21px;line-height:21px;font-weight:400;color:#212529;letter-spacing:0.250px">2</div>
<div class="t" style="left:485.30px;top:562.37px;font-size:21px;line-height:21px;font-weight:400;color:#212529;letter-spacing:-0.145px">Java Cook book</div>
<div class="t" style="left:1271.50px;top:562.37px;font-size:21px;line-height:21px;font-weight:400;color:#212529;letter-spacing:0.250px">5.0</div>
<div class="t" style="left:1375.70px;top:562.37px;font-size:21px;line-height:21px;font-weight:400;color:#212529;letter-spacing:0.250px">1f</div>
<div class="t" style="left:1518.80px;top:562.37px;font-size:21px;line-height:21px;font-weight:400;color:#212529;letter-spacing:0.250px">99</div>
<div class="t" style="left:1704.90px;top:566.86px;font-size:19.6px;line-height:19.6px;font-weight:400;color:#fff;letter-spacing:-0.557px;-webkit-text-stroke:0.45px #fff">Update</div>
<div class="t" style="left:416.40px;top:698.62px;font-size:21px;line-height:21px;font-weight:400;color:#212529;letter-spacing:0.250px">3</div>
<div class="t" style="left:485.30px;top:698.62px;font-size:21px;line-height:21px;font-weight:400;color:#212529;letter-spacing:-0.151px">Java The Complete Reference</div>
<div class="t" style="left:1271.50px;top:698.62px;font-size:21px;line-height:21px;font-weight:400;color:#212529;letter-spacing:0.250px">4.0</div>
<div class="t" style="left:1375.70px;top:698.62px;font-size:21px;line-height:21px;font-weight:400;color:#212529;letter-spacing:0.821px">2f</div>
<div class="t" style="left:1518.80px;top:698.62px;font-size:21px;line-height:21px;font-weight:400;color:#212529;letter-spacing:0.250px">97</div>
<div class="t" style="left:1704.90px;top:703.11px;font-size:19.6px;line-height:19.6px;font-weight:400;color:#fff;letter-spacing:-0.557px;-webkit-text-stroke:0.45px #fff">Update</div>
<div class="t" style="left:416.40px;top:834.87px;font-size:21px;line-height:21px;font-weight:400;color:#212529;letter-spacing:0.250px">4</div>
<div class="t" style="left:485.30px;top:834.87px;font-size:21px;line-height:21px;font-weight:400;color:#212529;letter-spacing:-0.130px">Java Coding Problems</div>
<div class="t" style="left:1271.50px;top:834.87px;font-size:21px;line-height:21px;font-weight:400;color:#212529;letter-spacing:0.250px">0.9</div>
<div class="t" style="left:1375.70px;top:834.87px;font-size:21px;line-height:21px;font-weight:400;color:#212529;letter-spacing:0.821px">2f</div>
<div class="t" style="left:1518.80px;top:834.87px;font-size:21px;line-height:21px;font-weight:400;color:#212529;letter-spacing:0.250px">97</div>
<div class="t" style="left:1704.90px;top:839.36px;font-size:19.6px;line-height:19.6px;font-weight:400;color:#fff;letter-spacing:-0.557px;-webkit-text-stroke:0.45px #fff">Update</div>
<div class="t" style="left:416.40px;top:971.12px;font-size:21px;line-height:21px;font-weight:400;color:#212529;letter-spacing:0.250px">5</div>
<div class="t" style="left:484.30px;top:971.12px;font-size:21px;line-height:21px;font-weight:400;color:#212529;letter-spacing:-0.103px">Clean Code</div>
<div class="t" style="left:1271.50px;top:971.12px;font-size:21px;line-height:21px;font-weight:400;color:#212529;letter-spacing:0.250px">5.9</div>
<div class="t" style="left:1375.70px;top:971.12px;font-size:21px;line-height:21px;font-weight:400;color:#212529;letter-spacing:0.821px">2f</div>
<div class="t" style="left:1517.80px;top:971.12px;font-size:21px;line-height:21px;font-weight:400;color:#212529;letter-spacing:-0.029px">100</div>
<div class="t" style="left:1704.90px;top:975.61px;font-size:19.6px;line-height:19.6px;font-weight:400;color:#fff;letter-spacing:-0.557px;-webkit-text-stroke:0.45px #fff">Update</div>
<div class="t" style="left:415.40px;top:1107.37px;font-size:21px;line-height:21px;font-weight:400;color:#212529;letter-spacing:0.250px">6</div>
<div class="t" style="left:484.30px;top:1107.37px;font-size:21px;line-height:21px;font-weight:400;color:#212529;letter-spacing:-0.022px">Head First Patterns</div>
<div class="t" style="left:1271.50px;top:1107.37px;font-size:21px;line-height:21px;font-weight:400;color:#212529;letter-spacing:0.036px">45.0</div>
<div class="t" style="left:1375.70px;top:1107.37px;font-size:21px;line-height:21px;font-weight:400;color:#212529;letter-spacing:0.821px">2f</div>
<div class="t" style="left:1517.80px;top:1107.37px;font-size:21px;line-height:21px;font-weight:400;color:#212529;letter-spacing:-0.029px">100</div>
<div class="t" style="left:1704.90px;top:1111.86px;font-size:19.6px;line-height:19.6px;font-weight:400;color:#fff;letter-spacing:-0.557px;-webkit-text-stroke:0.45px #fff">Update</div>
</body></html>
